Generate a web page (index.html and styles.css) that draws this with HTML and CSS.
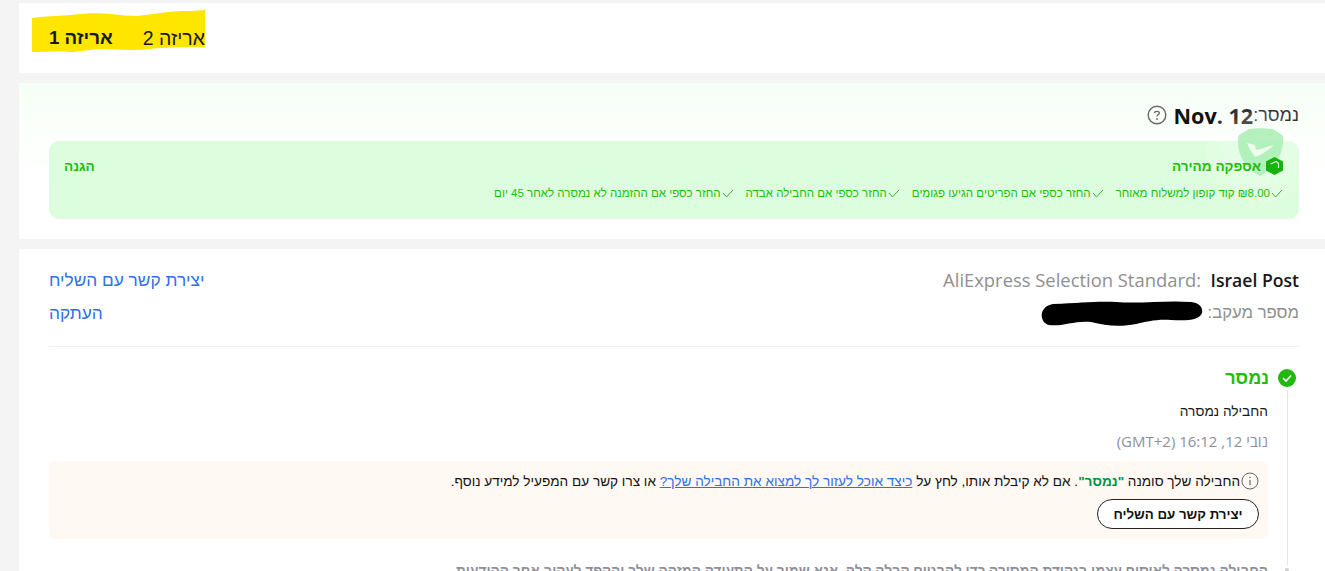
FILE: index.html
```html
<!DOCTYPE html>
<html lang="he" dir="rtl">
<head>
  <meta charset="UTF-8">
  <title>מעקב הזמנה</title>
  <link rel="stylesheet" href="styles.css">
</head>
<body>
  <div class="page">
    <section class="card tabs">
      <svg class="marker-yellow" width="176" height="44" viewBox="0 0 176 44">
        <path d="M1 8 C15 6 28 6 40 5 C55 3 68 3 80 4 C90 5 98 6 105 6 C115 5 122 4 130 3 C142 1 152 1 160 1 L174 0 L174 37 C160 37 145 37 130 38 C118 39 110 40 100 40 C90 40 80 39 70 39 C60 39 50 42 40 42 C28 41 14 42 1 42 Z" fill="#ffe600"/>
      </svg>
      <span class="tab">אריזה 2</span>
      <span class="tab tab-active">אריזה 1</span>
    </section>

    <section class="card delivery">
      <h2 class="delivery-date">
        <span>נמסר:</span><span class="date-en" dir="ltr">Nov. 12</span>
        <svg class="help-icon" width="20" height="20" viewBox="0 0 20 20">
          <circle cx="10" cy="10" r="8.8" fill="none" stroke="#666" stroke-width="1.4"/>
          <path d="M7.6 8 C7.6 5.9 12.4 5.9 12.4 8 C12.4 9.6 10 9.6 10 11.6" fill="none" stroke="#666" stroke-width="1.3"/>
          <circle cx="10" cy="14" r="0.9" fill="#666"/>
        </svg>
      </h2>
      <div class="fast-box">
        <svg class="badge-shield" width="110" height="110" viewBox="0 0 110 110">
          <circle cx="55" cy="50" r="54" fill="#fff" opacity="0.14"/>
          <circle cx="55" cy="50" r="38" fill="#fff" opacity="0.12"/>
          <path d="M44 30 C50 29 60 29 68 30 L77 36 C79 38 78 40 78 44 C77 58 68 70 55 77 C42 70 33 58 33 44 C33 40 33 38 34 36 Z" fill="#a9edb4" opacity="0.85"/>
          <path d="M42 44 C45 45 48 45 50 46 L51 51 C57 50 63 47 69 46 C62 52 56 56 50 58 C47 54 44 49 42 44 Z" fill="#eefcee"/>
        </svg>
        <div class="fast-head">
          <div class="fast-title">
            <svg width="17" height="18" viewBox="0 0 17 18">
              <path d="M8.5 0 L17 4.5 V13.5 L8.5 18 L0 13.5 V4.5 Z" fill="#16b30a"/>
              <path d="M4.5 7 L10.5 4.5 L12.5 6.5 V11" fill="none" stroke="#d8f5d8" stroke-width="1.1"/>
            </svg>
            <span>אספקה מהירה</span>
          </div>
          <span class="fast-arrive">הגנה</span>
        </div>
        <ul class="perks">
          <li><svg class="tick" width="12" height="9" viewBox="0 0 12 9"><path d="M1 4 L4.5 8 L11 1" fill="none" stroke="#2fb82a"/></svg><span>₪8.00 קוד קופון למשלוח מאוחר</span></li>
          <li><svg class="tick" width="12" height="9" viewBox="0 0 12 9"><path d="M1 4 L4.5 8 L11 1" fill="none" stroke="#2fb82a"/></svg><span>החזר כספי אם הפריטים הגיעו פגומים</span></li>
          <li><svg class="tick" width="12" height="9" viewBox="0 0 12 9"><path d="M1 4 L4.5 8 L11 1" fill="none" stroke="#2fb82a"/></svg><span>החזר כספי אם החבילה אבדה</span></li>
          <li><svg class="tick" width="12" height="9" viewBox="0 0 12 9"><path d="M1 4 L4.5 8 L11 1" fill="none" stroke="#2fb82a"/></svg><span>החזר כספי אם ההזמנה לא נמסרה לאחר 45 יום</span></li>
        </ul>
      </div>
    </section>

    <section class="card tracking">
      <div class="info-row">
        <div class="carrier"><strong>Israel Post</strong> <span class="muted" dir="ltr">AliExpress Selection Standard:</span></div>
        <a class="link" href="#">יצירת קשר עם השליח</a>
      </div>
      <div class="info-row info-row-second">
        <div class="track-no">
          <span class="muted">מספר מעקב:</span>
          <svg class="marker-black" width="162" height="26" viewBox="0 0 162 26">
            <path d="M12 3 C40 2 55 0 75 1 C100 3 125 -1 150 1 C160 2 162 8 161 12 C158 19 148 20 130 19 C115 18 105 21 95 23 C80 26 65 25 50 21 C35 19 20 26 8 24 C0 22 -1 12 3 8 C5 5 8 4 12 3 Z" fill="#000"/>
          </svg>
        </div>
        <a class="link" href="#">העתקה</a>
      </div>

      <div class="timeline">
        <div class="status">
          <svg width="18" height="18" viewBox="0 0 18 18">
            <circle cx="9" cy="9" r="9" fill="#22b80e"/>
            <path d="M5 9 L8 12 L13 6.5" fill="none" stroke="#fff" stroke-width="1.6"/>
          </svg>
          <span>נמסר</span>
        </div>
        <div class="timeline-body">
          <p class="event">החבילה נמסרה</p>
          <p class="event-time">נובי 12, 16:12 (GMT+2)</p>
          <div class="notice">
            <p class="notice-text">
              <svg class="info-icon" width="18" height="18" viewBox="0 0 18 18">
                <circle cx="9" cy="9" r="8" fill="none" stroke="#666"/>
                <path d="M9 8 V13" stroke="#666" stroke-width="1.2"/>
                <circle cx="9" cy="5.5" r="0.8" fill="#666"/>
              </svg>
              <span>החבילה שלך סומנה <b class="green-word">"נמסר"</b>. אם לא קיבלת אותו, לחץ על <a href="#">כיצד אוכל לעזור לך למצוא את החבילה שלך?</a> או צרו קשר עם המפעיל למידע נוסף.</span>
            </p>
            <button class="contact-btn">יצירת קשר עם השליח</button>
          </div>
        </div>
        <div class="next-event">
          <span class="next-dot"></span>
          <p class="clipped">החבילה נמסרה לאיסוף עצמי בנקודת המסירה כדי להבטיח קבלה קלה, אנא שמור על התעודה המזהה שלך והקפד לעקוב אחר ההודעות</p>
        </div>
      </div>
    </section>
  </div>
</body>
</html>
```

FILE: styles.css
```css
* {
  box-sizing: border-box;
}

html, body {
  height: 100%;
  margin: 0;
  overflow: hidden;
}

body {
  background: #f4f4f4;
  font-family: "Liberation Sans", sans-serif;
  color: #191919;
}

.page {
  padding: 3px 0 0 19px;
  display: flex;
  flex-direction: column;
  gap: 10px;
}

.card {
  background: #fff;
}

/* tabs */
.tabs {
  position: relative;
  height: 70px;
  padding: 0 1120px 0 30px;
  display: flex;
  align-items: center;
  justify-content: flex-start;
  gap: 30px;
  font-size: 19.5px;
}

.tab {
  position: relative;
  white-space: nowrap;
}

.tab-active {
  font-size: 18.7px;
  font-weight: 700;
}

.marker-yellow {
  position: absolute;
  left: 12px;
  top: 7px;
}

/* delivery */
.delivery {
  height: 156px;
  padding: 19px 26px 0 30px;
  background: linear-gradient(to bottom, #f5fff5, #fdfffd 40%, #fff);
}

.delivery-date {
  margin: 0;
  height: 26px;
  display: flex;
  align-items: center;
  font-size: 18px;
  font-weight: 400;
  color: #111;
}

.date-en {
  font-family: "Open Sans", sans-serif;
  font-size: 21.6px;
  font-weight: 700;
}

.help-icon {
  margin-right: 7px;
}

.fast-box {
  position: relative;
  margin-top: 13px;
  height: 78px;
  background: #dcfedf;
  border-radius: 10px;
  padding: 16px 16px 0 15px;
  color: #21bd0a;
}

.fast-head {
  position: relative;
  display: flex;
  justify-content: space-between;
  align-items: center;
  height: 18px;
  font-size: 13.6px;
  font-weight: 700;
}

.fast-title {
  display: flex;
  align-items: center;
  gap: 5px;
}

.perks {
  position: relative;
  list-style: none;
  margin: 12px 0 0;
  padding: 0;
  display: flex;
  gap: 12px;
  font-size: 11.5px;
  white-space: nowrap;
}

.perks li {
  display: flex;
  align-items: center;
  gap: 1px;
}

.badge-shield {
  position: absolute;
  right: -16px;
  top: -42px;
}

/* tracking */
.tracking {
  height: 340px;
  padding: 19px 26px 0 30px;
}

.info-row {
  display: flex;
  justify-content: space-between;
  align-items: center;
  height: 24px;
  font-size: 16.7px;
}

.info-row-second {
  margin-top: 9px;
}

.carrier {
  margin-top: -2px;
  font-family: "Open Sans", sans-serif;
  font-size: 17.6px;
}

.carrier strong {
  font-weight: 600;
}

.muted {
  color: #8f8f8f;
}

.carrier .muted {
  margin-right: 5px;
  font-size: 18.4px;
}

.link {
  color: #2f6fed;
  font-size: 17.3px;
  text-decoration: none;
}

.track-no {
  display: flex;
  align-items: center;
  gap: 5px;
}

.marker-black {
  position: relative;
  top: 1px;
}

.timeline {
  margin-top: 21px;
  border-top: 1px solid #f0f0f0;
  padding-top: 21px;
  font-size: 13.7px;
}

.status {
  display: flex;
  align-items: center;
  gap: 9px;
  padding-right: 3px;
  color: #21bd0a;
  font-size: 18px;
  font-weight: 700;
  height: 20px;
}

.timeline-body {
  margin-right: 11px;
  padding: 12px 19px 26px 0;
  margin-top: 2px;
  border-right: 1px solid #e5e5e5;
}

.event {
  margin: 0;
  height: 20px;
  line-height: 20px;
}

.event-time {
  margin: 9px 0 0;
  height: 20px;
  line-height: 20px;
  font-family: "Open Sans", "Liberation Sans", sans-serif;
  font-size: 15px;
  color: #8f8f9a;
}

.notice {
  margin-top: 10px;
  height: 78px;
  background: #fff8f3;
  border-radius: 6px;
  padding: 11px 9px 0 11px;
}

.notice-text {
  margin: 0 0 0 -2px;
  display: flex;
  align-items: center;
  gap: 1px;
  font-size: 13.6px;
  height: 18px;
  color: #111;
}

.notice-text a {
  color: #2f6fed;
}

.info-icon {
  flex: none;
}

.green-word {
  color: #00924a;
}

.contact-btn {
  display: block;
  margin-top: 9px;
  height: 30px;
  width: 162px;
  border: 1px solid #222;
  border-radius: 15px;
  background: #fff;
  font-family: "Liberation Sans", sans-serif;
  font-size: 13.3px;
  font-weight: 700;
  color: #111;
}

.next-event {
  display: flex;
  align-items: flex-start;
  gap: 17px;
  padding-right: 10px;
}

.next-dot {
  flex: none;
  width: 4px;
  height: 4px;
  margin-top: 3px;
  border-radius: 50%;
  background: #d0d0d0;
}

.clipped {
  margin: 0;
  font-size: 13.7px;
  line-height: 12px;
  font-weight: 700;
  color: #8f8f9a;
  white-space: nowrap;
}
```
